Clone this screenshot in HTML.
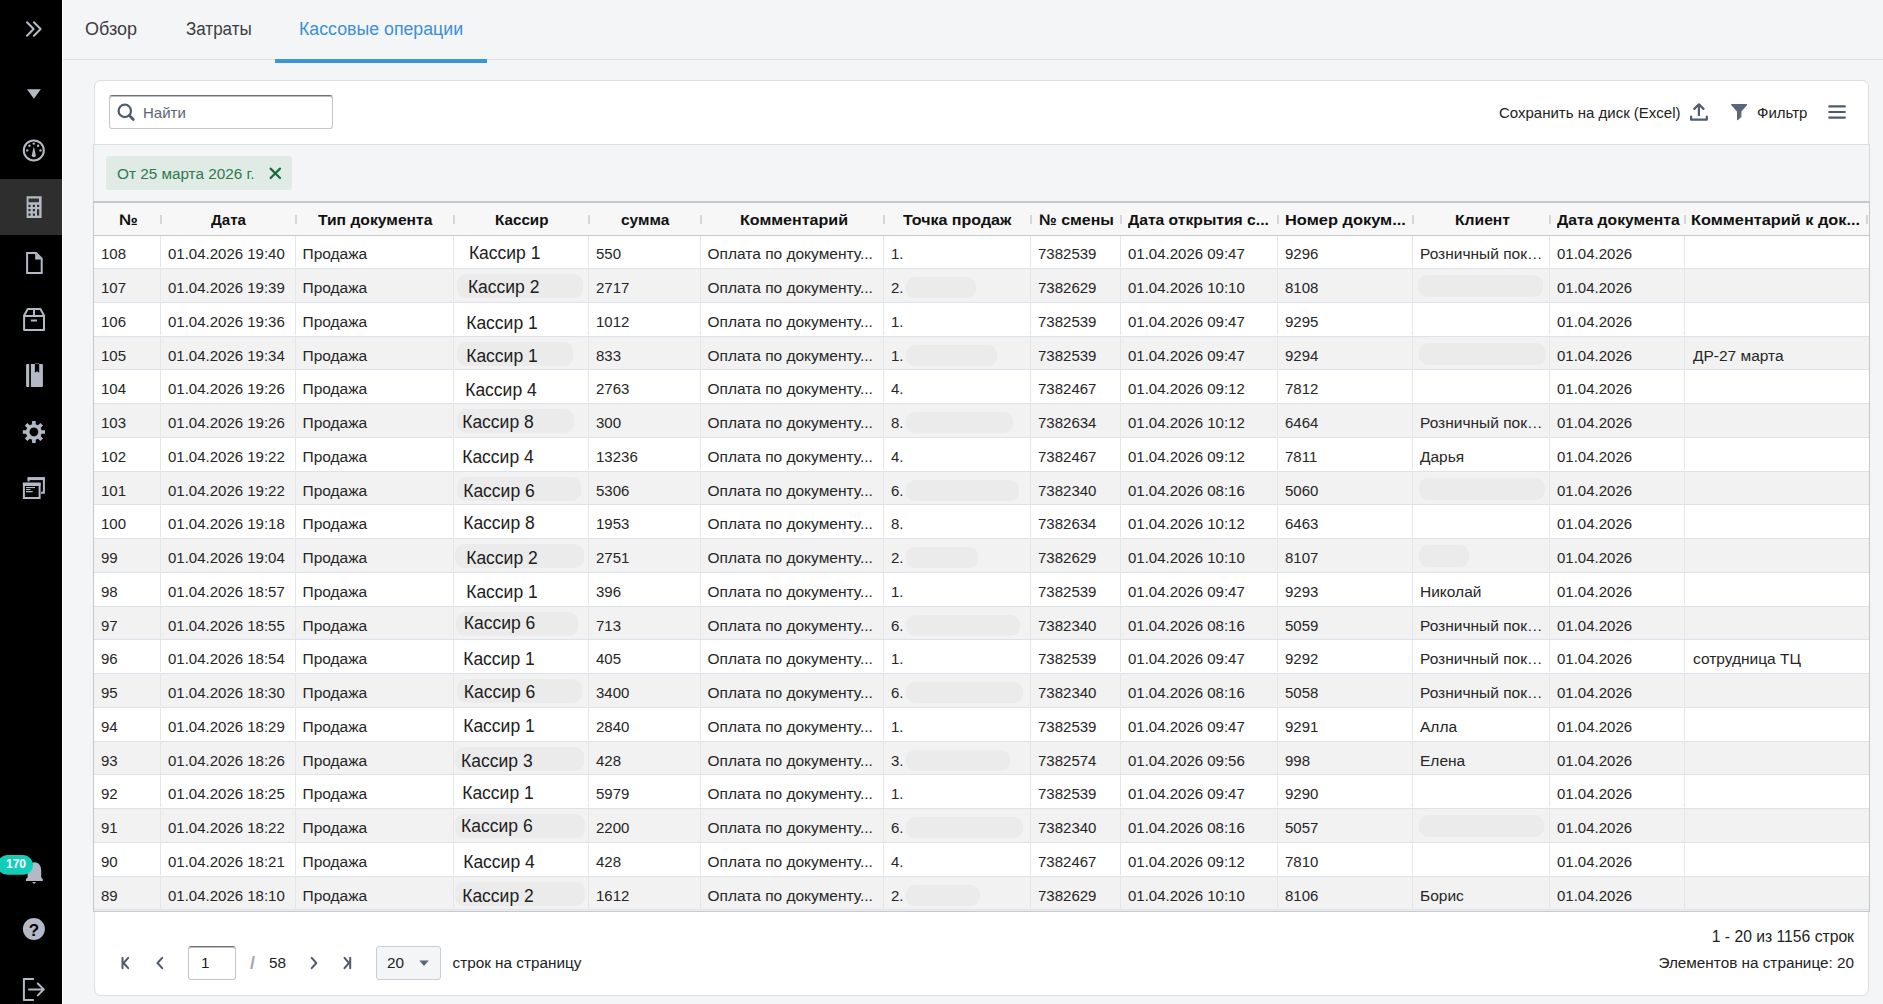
<!DOCTYPE html>
<html lang="ru">
<head>
<meta charset="utf-8">
<title>Кассовые операции</title>
<style>
*{box-sizing:border-box;margin:0;padding:0}
html,body{width:1883px;height:1004px;overflow:hidden}
body{background:#f4f5f7;font-family:"Liberation Sans",sans-serif;color:#333;position:relative}
.abs{position:absolute}
/* sidebar */
#sb{position:absolute;left:0;top:0;width:62px;height:1004px;background:#000}
#sb .act{position:absolute;left:0;top:179px;width:62px;height:56px;background:#2e2e2e}
#sb svg{position:absolute}
#sbline{position:absolute;left:62px;top:0;width:1px;height:1004px;background:#fff}
/* tabs */
#tabs{position:absolute;left:63px;top:0;width:1820px;height:60px;border-bottom:1px solid #dcdee2}
.tab{position:absolute;top:18px;font-size:18px;color:#3d3d3d;transform-origin:0 0;white-space:nowrap;line-height:22px}
.tab.on{color:#3a90d3}
#uline{position:absolute;left:275px;top:59px;width:212px;height:4px;background:#3a96db}
/* card */
#card{position:absolute;left:94px;top:80px;width:1775px;height:916px;background:#fff;border:1px solid #dcdee1;border-radius:7px}
#search{position:absolute;left:109px;top:95px;width:224px;height:34px;border:1px solid #c3c6ca;border-top:1px solid #6f7378;box-shadow:inset 0 1px 0 #b9bcc0;border-radius:3px;background:#fff}
#search .ph{position:absolute;left:33px;top:8px;font-size:15px;color:#5a6573;line-height:18px}
#filt{position:absolute;left:93px;top:144px;width:1777px;height:58px;background:#f4f5f7;border-top:1px solid #dcdee2;border-left:1px solid #d6d8dc;border-right:1px solid #d6d8dc}
#chip{position:absolute;left:106px;top:156px;width:186px;height:34px;background:#e1ebe6;border-radius:3px}
#chip span{position:absolute;left:11px;top:9px;font-size:15.3px;color:#2d7a4b;white-space:nowrap;line-height:18px}
.tool{position:absolute;top:103px;font-size:15px;color:#222;white-space:nowrap;line-height:20px}
/* table */
#thead{position:absolute;z-index:2;left:94px;top:201px;width:1775px;height:35px;background:#f7f7f7;border-top:2px solid #c5c7c9;border-bottom:1px solid #c5c7c9}
#tl{position:absolute;z-index:3;left:93px;top:201px;width:1px;height:711px;background:#c5c7c9}
#tr{position:absolute;z-index:3;left:1869px;top:201px;width:1px;height:711px;background:#c5c7c9}
.th{position:absolute;transform-origin:0 0;top:8px;font-size:15.5px;font-weight:700;color:#111;white-space:nowrap;line-height:18px}
.hdiv{position:absolute;top:12px;width:2px;height:9px;background:#d6d6d6}
#tbody{position:absolute;left:94px;top:235.25px;width:1775px;height:675.75px;background:#eceef2}
.tr{position:absolute;left:0;width:1775px;height:33.75px;background:#fff;border-bottom:1px solid #dde2ea}
.tr.g{background:#f2f2f2}
.vl{position:absolute;top:0;width:1px;height:32px;background:#e6e6e6}
.td{position:absolute;top:10px;font-size:15.5px;color:#262626;white-space:nowrap;line-height:17.65px;transform:scaleX(0.968);transform-origin:0 0}
.cash{position:absolute;top:7px;font-size:17.5px;color:#202020;white-space:nowrap;line-height:20px}
.td.l{font-size:15.5px;top:10px;line-height:17.65px;transform:none}
.blob{position:absolute;background:#ebebeb;border-radius:9px}
#tbot{position:absolute;left:93px;top:911px;width:1777px;height:1px;background:#c6c8ca}
/* footer */
.pg{position:absolute;font-size:15.3px;color:#222;white-space:nowrap;line-height:18px}
#pinput{position:absolute;left:188px;top:946px;width:48px;height:34px;border:1px solid #c3c6ca;border-top:1px solid #6f7378;box-shadow:inset 0 1px 0 #b9bcc0;border-radius:3px;background:#fff}
#psel{position:absolute;left:376px;top:946px;width:65px;height:34px;border:1px solid #c9ccd0;border-radius:3px;background:#f4f5f7}
</style>
</head>
<body>
<div id="sb">
  <div class="act"></div>
<svg width="62" height="1004" viewBox="0 0 62 1004" style="left:0;top:0">
 <g fill="none" stroke="#b3b9c5" stroke-width="2" stroke-linecap="round" stroke-linejoin="round">
  <path d="M27 22.2L33.6 29L27 35.8M33.9 22.2L40.6 29L33.9 35.8"/>
 </g>
 <path d="M27 89.2H40.8L33.9 98.7Z" fill="#b3b9c5"/>
 <g fill="none" stroke="#b3b9c5" stroke-width="2">
  <circle cx="33.8" cy="150.4" r="10"/>
 </g>
 <g fill="#b3b9c5">
  <circle cx="33.8" cy="143.6" r="1.2"/><circle cx="29.5" cy="145.8" r="1.2"/><circle cx="38.1" cy="145.8" r="1.2"/>
  <circle cx="27.2" cy="150.4" r="1.2"/><circle cx="40.5" cy="150.4" r="1.2"/>
  <path d="M33.8 146.2L35.8 155.2A2 2 0 0 1 31.8 155.2Z"/>
 </g>
 <path fill="#b3b9c5" fill-rule="evenodd" d="M26.6 196.2H41.6V218.1H26.6Z M28.5 198.4V202.2H39V198.4Z M28.4 204.7h2.2v2.2h-2.2Z M32.8 204.7h2.2v2.2h-2.2Z M37 204.7h2.2v2.2h-2.2Z M28.4 209h2.2v2.2h-2.2Z M32.8 209h2.2v2.2h-2.2Z M37 209.3h2.2v6.2h-2.2Z M28.4 213.5h2.2v2.2h-2.2Z M32.8 213.5h2.2v2.2h-2.2Z"/>
 <g fill="none" stroke="#b3b9c5" stroke-width="2" stroke-linejoin="miter">
  <path d="M27.1 253.1H36.2L41.7 258.6V272.9H27.1Z"/>
 </g>
 <path d="M35.2 253.2V259.6H41.8Z" fill="#b3b9c5"/>
 <g fill="none" stroke="#b3b9c5" stroke-width="2" stroke-linejoin="round">
  <path d="M24.1 315.5L27.8 309H40.4L44 315.5V330H24.1Z"/>
  <path d="M24.1 316H44M34 309V316M30.9 320.6H37"/>
 </g>
 <path fill="#b3b9c5" fill-rule="evenodd" d="M27.1 363.9H42A1 1 0 0 1 42.9 364.9V385.9A1 1 0 0 1 42 386.9H27.1A1 1 0 0 1 26.1 385.9V364.9A1 1 0 0 1 27.1 363.9Z M29.2 363.9H30.9V386.9H29.2Z M34.9 363.6H39.2V372.8L37.1 371.2L34.9 372.8Z"/>
 <path fill="#b3b9c5" fill-rule="evenodd" d="M32.1 420.9h3.6v3.4a7.6 7.6 0 0 1 2.3 1l2.4-2.4 2.6 2.6-2.4 2.4a7.6 7.6 0 0 1 1 2.3h3.4v3.6h-3.4a7.6 7.6 0 0 1-1 2.3l2.4 2.4-2.6 2.6-2.4-2.4a7.6 7.6 0 0 1-2.3 1v3.4h-3.6v-3.4a7.6 7.6 0 0 1-2.3-1l-2.4 2.4-2.6-2.6 2.4-2.4a7.6 7.6 0 0 1-1-2.3h-3.4v-3.6h3.4a7.6 7.6 0 0 1 1-2.3l-2.4-2.4 2.6-2.6 2.4 2.4a7.6 7.6 0 0 1 2.3-1Z M33.9 427.5a4.4 4.4 0 1 0 0.01 0Z"/>
 <g fill="none" stroke="#b3b9c5" stroke-width="2">
  <path d="M28.6 481.5V478.6H43.9V492.7H41"/>
  <path d="M23.9 484H39.6V497.9H23.9Z"/>
 </g>
 <g fill="#b3b9c5">
  <rect x="27.6" y="477.1" width="17.3" height="3"/>
  <rect x="22.9" y="482.5" width="17.7" height="3.5"/>
  <rect x="26" y="487" width="9" height="1.1"/>
  <rect x="26" y="489" width="4.5" height="1.1"/>
  <rect x="26" y="491" width="6.7" height="1.3"/>
 </g>
 <path fill="#b3b9c5" d="M34.5 862.2C39 862.2 41.2 866 41.2 870.5V877.2L42.8 879.2V880.9H25.9V879.2L27.6 877.2V870.5C27.6 866 30 862.2 34.5 862.2Z M32 882H36.2L34.1 883.9Z"/>
 <rect x="-2.5" y="855" width="35.5" height="19.8" rx="9.9" fill="#13cdb9"/>
 <text x="16" y="868" font-family="Liberation Sans" font-weight="700" font-size="12" fill="#fff" text-anchor="middle">170</text>
 <circle cx="33.9" cy="929" r="11" fill="#b3b9c5"/>
 <text x="33.9" y="935.6" font-family="Liberation Sans" font-weight="700" font-size="17" fill="#000" text-anchor="middle">?</text>
 <g fill="none" stroke="#b3b9c5" stroke-width="2" stroke-linecap="round" stroke-linejoin="round">
  <path d="M33.2 978.9H23.9V1000H33.2"/>
  <path d="M29 989.4H43.8M37.8 983.5L43.8 989.4L37.8 995.4"/>
 </g>
</svg>
</div>
<div id="sbline"></div>

<div id="tabs"></div>
<div class="tab" style="left:85px">Обзор</div>
<div class="tab" style="left:185.5px;transform:scaleX(0.945)">Затраты</div>
<div class="tab on" style="left:299px;transform:scaleX(0.986)">Кассовые операции</div>
<div id="uline"></div>

<div id="card"></div>
<div id="search"><span class="ph">Найти</span></div>
<div class="tool" style="left:1499px">Сохранить на диск (Excel)</div>
<div class="tool" style="left:1757px">Фильтр</div>

<div id="filt"></div>
<div id="chip"><span>От 25 марта 2026 г.</span></div>

<div id="thead">
<div class="th" style="left:25.1px;transform:scaleX(1.09)">№</div>
<div class="th" style="left:116.9px;transform:scaleX(0.975)">Дата</div>
<div class="th" style="left:223.7px;transform:scaleX(1.011)">Тип документа</div>
<div class="th" style="left:401.2px;transform:scaleX(0.981)">Кассир</div>
<div class="th" style="left:527.0px;transform:scaleX(1.0)">сумма</div>
<div class="th" style="left:645.8px;transform:scaleX(1.035)">Комментарий</div>
<div class="th" style="left:809.4px;transform:scaleX(1.034)">Точка продаж</div>
<div class="th" style="left:945.2px;transform:scaleX(1.028)">№ смены</div>
<div class="th" style="left:1033.7px;transform:scaleX(1.011)">Дата открытия с...</div>
<div class="th" style="left:1190.9px;transform:scaleX(1.059)">Номер докум...</div>
<div class="th" style="left:1360.8px;transform:scaleX(1.011)">Клиент</div>
<div class="th" style="left:1462.7px;transform:scaleX(1.011)">Дата документа</div>
<div class="th" style="left:1597.2px;transform:scaleX(1.052)">Комментарий к док...</div>
<div class="hdiv" style="left:66px"></div>
<div class="hdiv" style="left:201px"></div>
<div class="hdiv" style="left:359px"></div>
<div class="hdiv" style="left:494px"></div>
<div class="hdiv" style="left:606px"></div>
<div class="hdiv" style="left:789px"></div>
<div class="hdiv" style="left:936px"></div>
<div class="hdiv" style="left:1026px"></div>
<div class="hdiv" style="left:1183px"></div>
<div class="hdiv" style="left:1318px"></div>
<div class="hdiv" style="left:1455px"></div>
<div class="hdiv" style="left:1590px"></div>
<div class="hdiv" style="left:1772px"></div>
</div>
<div id="tbody">
<div class="tr" style="top:0.00px"><i class="vl" style="left:66px"></i><i class="vl" style="left:201px"></i><i class="vl" style="left:359px"></i><i class="vl" style="left:494px"></i><i class="vl" style="left:606px"></i><i class="vl" style="left:789px"></i><i class="vl" style="left:936px"></i><i class="vl" style="left:1026px"></i><i class="vl" style="left:1183px"></i><i class="vl" style="left:1318px"></i><i class="vl" style="left:1455px"></i><i class="vl" style="left:1590px"></i><span class="td" style="left:6.5px">108</span><span class="td" style="left:74.0px">01.04.2026 19:40</span><span class="td l" style="left:208.5px">Продажа</span><span class="cash" style="left:374.9px;top:8px">Кассир 1</span><span class="td" style="left:501.5px">550</span><span class="td l" style="left:613.5px">Оплата по документу...</span><span class="td" style="left:797.0px">1.</span><span class="td" style="left:943.5px">7382539</span><span class="td" style="left:1033.5px">01.04.2026 09:47</span><span class="td" style="left:1191.0px">9296</span><span class="td l" style="left:1326.0px">Розничный пок…</span><span class="td" style="left:1463.0px">01.04.2026</span></div>
<div class="tr g" style="top:33.75px"><i class="vl" style="left:66px"></i><i class="vl" style="left:201px"></i><i class="vl" style="left:359px"></i><i class="vl" style="left:494px"></i><i class="vl" style="left:606px"></i><i class="vl" style="left:789px"></i><i class="vl" style="left:936px"></i><i class="vl" style="left:1026px"></i><i class="vl" style="left:1183px"></i><i class="vl" style="left:1318px"></i><i class="vl" style="left:1455px"></i><i class="vl" style="left:1590px"></i><span class="td" style="left:6.5px">107</span><span class="td" style="left:74.0px">01.04.2026 19:39</span><span class="td l" style="left:208.5px">Продажа</span><span class="blob" style="left:363px;width:126px;top:5px;height:24px"></span><span class="cash" style="left:373.9px;top:8px">Кассир 2</span><span class="td" style="left:501.5px">2717</span><span class="td l" style="left:613.5px">Оплата по документу...</span><span class="td" style="left:797.0px">2.</span><span class="blob" style="left:812px;width:70px;top:8px;height:21px"></span><span class="td" style="left:943.5px">7382629</span><span class="td" style="left:1033.5px">01.04.2026 10:10</span><span class="td" style="left:1191.0px">8108</span><span class="blob" style="left:1324px;width:125px;top:6px;height:22px"></span><span class="td" style="left:1463.0px">01.04.2026</span></div>
<div class="tr" style="top:67.50px"><i class="vl" style="left:66px"></i><i class="vl" style="left:201px"></i><i class="vl" style="left:359px"></i><i class="vl" style="left:494px"></i><i class="vl" style="left:606px"></i><i class="vl" style="left:789px"></i><i class="vl" style="left:936px"></i><i class="vl" style="left:1026px"></i><i class="vl" style="left:1183px"></i><i class="vl" style="left:1318px"></i><i class="vl" style="left:1455px"></i><i class="vl" style="left:1590px"></i><span class="td" style="left:6.5px">106</span><span class="td" style="left:74.0px">01.04.2026 19:36</span><span class="td l" style="left:208.5px">Продажа</span><span class="cash" style="left:372.2px;top:10px">Кассир 1</span><span class="td" style="left:501.5px">1012</span><span class="td l" style="left:613.5px">Оплата по документу...</span><span class="td" style="left:797.0px">1.</span><span class="td" style="left:943.5px">7382539</span><span class="td" style="left:1033.5px">01.04.2026 09:47</span><span class="td" style="left:1191.0px">9295</span><span class="td" style="left:1463.0px">01.04.2026</span></div>
<div class="tr g" style="top:101.25px"><i class="vl" style="left:66px"></i><i class="vl" style="left:201px"></i><i class="vl" style="left:359px"></i><i class="vl" style="left:494px"></i><i class="vl" style="left:606px"></i><i class="vl" style="left:789px"></i><i class="vl" style="left:936px"></i><i class="vl" style="left:1026px"></i><i class="vl" style="left:1183px"></i><i class="vl" style="left:1318px"></i><i class="vl" style="left:1455px"></i><i class="vl" style="left:1590px"></i><span class="td" style="left:6.5px">105</span><span class="td" style="left:74.0px">01.04.2026 19:34</span><span class="td l" style="left:208.5px">Продажа</span><span class="blob" style="left:363px;width:116px;top:5px;height:24px"></span><span class="cash" style="left:372.2px;top:9px">Кассир 1</span><span class="td" style="left:501.5px">833</span><span class="td l" style="left:613.5px">Оплата по документу...</span><span class="td" style="left:797.0px">1.</span><span class="blob" style="left:812px;width:91px;top:8px;height:21px"></span><span class="td" style="left:943.5px">7382539</span><span class="td" style="left:1033.5px">01.04.2026 09:47</span><span class="td" style="left:1191.0px">9294</span><span class="blob" style="left:1325px;width:127px;top:6px;height:22px"></span><span class="td" style="left:1463.0px">01.04.2026</span><span class="td l" style="left:1599.0px">ДР-27 марта</span></div>
<div class="tr" style="top:135.00px"><i class="vl" style="left:66px"></i><i class="vl" style="left:201px"></i><i class="vl" style="left:359px"></i><i class="vl" style="left:494px"></i><i class="vl" style="left:606px"></i><i class="vl" style="left:789px"></i><i class="vl" style="left:936px"></i><i class="vl" style="left:1026px"></i><i class="vl" style="left:1183px"></i><i class="vl" style="left:1318px"></i><i class="vl" style="left:1455px"></i><i class="vl" style="left:1590px"></i><span class="td" style="left:6.5px">104</span><span class="td" style="left:74.0px">01.04.2026 19:26</span><span class="td l" style="left:208.5px">Продажа</span><span class="cash" style="left:371.2px;top:10px">Кассир 4</span><span class="td" style="left:501.5px">2763</span><span class="td l" style="left:613.5px">Оплата по документу...</span><span class="td" style="left:797.0px">4.</span><span class="td" style="left:943.5px">7382467</span><span class="td" style="left:1033.5px">01.04.2026 09:12</span><span class="td" style="left:1191.0px">7812</span><span class="td" style="left:1463.0px">01.04.2026</span></div>
<div class="tr g" style="top:168.75px"><i class="vl" style="left:66px"></i><i class="vl" style="left:201px"></i><i class="vl" style="left:359px"></i><i class="vl" style="left:494px"></i><i class="vl" style="left:606px"></i><i class="vl" style="left:789px"></i><i class="vl" style="left:936px"></i><i class="vl" style="left:1026px"></i><i class="vl" style="left:1183px"></i><i class="vl" style="left:1318px"></i><i class="vl" style="left:1455px"></i><i class="vl" style="left:1590px"></i><span class="td" style="left:6.5px">103</span><span class="td" style="left:74.0px">01.04.2026 19:26</span><span class="td l" style="left:208.5px">Продажа</span><span class="blob" style="left:363px;width:117px;top:5px;height:24px"></span><span class="cash" style="left:368.2px;top:8px">Кассир 8</span><span class="td" style="left:501.5px">300</span><span class="td l" style="left:613.5px">Оплата по документу...</span><span class="td" style="left:797.0px">8.</span><span class="blob" style="left:812px;width:107px;top:8px;height:21px"></span><span class="td" style="left:943.5px">7382634</span><span class="td" style="left:1033.5px">01.04.2026 10:12</span><span class="td" style="left:1191.0px">6464</span><span class="td l" style="left:1326.0px">Розничный пок…</span><span class="td" style="left:1463.0px">01.04.2026</span></div>
<div class="tr" style="top:202.50px"><i class="vl" style="left:66px"></i><i class="vl" style="left:201px"></i><i class="vl" style="left:359px"></i><i class="vl" style="left:494px"></i><i class="vl" style="left:606px"></i><i class="vl" style="left:789px"></i><i class="vl" style="left:936px"></i><i class="vl" style="left:1026px"></i><i class="vl" style="left:1183px"></i><i class="vl" style="left:1318px"></i><i class="vl" style="left:1455px"></i><i class="vl" style="left:1590px"></i><span class="td" style="left:6.5px">102</span><span class="td" style="left:74.0px">01.04.2026 19:22</span><span class="td l" style="left:208.5px">Продажа</span><span class="cash" style="left:368.2px;top:9px">Кассир 4</span><span class="td" style="left:501.5px">13236</span><span class="td l" style="left:613.5px">Оплата по документу...</span><span class="td" style="left:797.0px">4.</span><span class="td" style="left:943.5px">7382467</span><span class="td" style="left:1033.5px">01.04.2026 09:12</span><span class="td" style="left:1191.0px">7811</span><span class="td l" style="left:1326.0px">Дарья</span><span class="td" style="left:1463.0px">01.04.2026</span></div>
<div class="tr g" style="top:236.25px"><i class="vl" style="left:66px"></i><i class="vl" style="left:201px"></i><i class="vl" style="left:359px"></i><i class="vl" style="left:494px"></i><i class="vl" style="left:606px"></i><i class="vl" style="left:789px"></i><i class="vl" style="left:936px"></i><i class="vl" style="left:1026px"></i><i class="vl" style="left:1183px"></i><i class="vl" style="left:1318px"></i><i class="vl" style="left:1455px"></i><i class="vl" style="left:1590px"></i><span class="td" style="left:6.5px">101</span><span class="td" style="left:74.0px">01.04.2026 19:22</span><span class="td l" style="left:208.5px">Продажа</span><span class="blob" style="left:363px;width:124px;top:5px;height:24px"></span><span class="cash" style="left:369.2px;top:9px">Кассир 6</span><span class="td" style="left:501.5px">5306</span><span class="td l" style="left:613.5px">Оплата по документу...</span><span class="td" style="left:797.0px">6.</span><span class="blob" style="left:812px;width:113px;top:8px;height:21px"></span><span class="td" style="left:943.5px">7382340</span><span class="td" style="left:1033.5px">01.04.2026 08:16</span><span class="td" style="left:1191.0px">5060</span><span class="blob" style="left:1325px;width:126px;top:6px;height:22px"></span><span class="td" style="left:1463.0px">01.04.2026</span></div>
<div class="tr" style="top:270.00px"><i class="vl" style="left:66px"></i><i class="vl" style="left:201px"></i><i class="vl" style="left:359px"></i><i class="vl" style="left:494px"></i><i class="vl" style="left:606px"></i><i class="vl" style="left:789px"></i><i class="vl" style="left:936px"></i><i class="vl" style="left:1026px"></i><i class="vl" style="left:1183px"></i><i class="vl" style="left:1318px"></i><i class="vl" style="left:1455px"></i><i class="vl" style="left:1590px"></i><span class="td" style="left:6.5px">100</span><span class="td" style="left:74.0px">01.04.2026 19:18</span><span class="td l" style="left:208.5px">Продажа</span><span class="cash" style="left:369.2px;top:8px">Кассир 8</span><span class="td" style="left:501.5px">1953</span><span class="td l" style="left:613.5px">Оплата по документу...</span><span class="td" style="left:797.0px">8.</span><span class="td" style="left:943.5px">7382634</span><span class="td" style="left:1033.5px">01.04.2026 10:12</span><span class="td" style="left:1191.0px">6463</span><span class="td" style="left:1463.0px">01.04.2026</span></div>
<div class="tr g" style="top:303.75px"><i class="vl" style="left:66px"></i><i class="vl" style="left:201px"></i><i class="vl" style="left:359px"></i><i class="vl" style="left:494px"></i><i class="vl" style="left:606px"></i><i class="vl" style="left:789px"></i><i class="vl" style="left:936px"></i><i class="vl" style="left:1026px"></i><i class="vl" style="left:1183px"></i><i class="vl" style="left:1318px"></i><i class="vl" style="left:1455px"></i><i class="vl" style="left:1590px"></i><span class="td" style="left:6.5px">99</span><span class="td" style="left:74.0px">01.04.2026 19:04</span><span class="td l" style="left:208.5px">Продажа</span><span class="blob" style="left:361px;width:129px;top:5px;height:24px"></span><span class="cash" style="left:372.2px;top:9px">Кассир 2</span><span class="td" style="left:501.5px">2751</span><span class="td l" style="left:613.5px">Оплата по документу...</span><span class="td" style="left:797.0px">2.</span><span class="blob" style="left:812px;width:72px;top:8px;height:21px"></span><span class="td" style="left:943.5px">7382629</span><span class="td" style="left:1033.5px">01.04.2026 10:10</span><span class="td" style="left:1191.0px">8107</span><span class="blob" style="left:1325px;width:50px;top:6px;height:22px"></span><span class="td" style="left:1463.0px">01.04.2026</span></div>
<div class="tr" style="top:337.50px"><i class="vl" style="left:66px"></i><i class="vl" style="left:201px"></i><i class="vl" style="left:359px"></i><i class="vl" style="left:494px"></i><i class="vl" style="left:606px"></i><i class="vl" style="left:789px"></i><i class="vl" style="left:936px"></i><i class="vl" style="left:1026px"></i><i class="vl" style="left:1183px"></i><i class="vl" style="left:1318px"></i><i class="vl" style="left:1455px"></i><i class="vl" style="left:1590px"></i><span class="td" style="left:6.5px">98</span><span class="td" style="left:74.0px">01.04.2026 18:57</span><span class="td l" style="left:208.5px">Продажа</span><span class="cash" style="left:372.2px;top:9px">Кассир 1</span><span class="td" style="left:501.5px">396</span><span class="td l" style="left:613.5px">Оплата по документу...</span><span class="td" style="left:797.0px">1.</span><span class="td" style="left:943.5px">7382539</span><span class="td" style="left:1033.5px">01.04.2026 09:47</span><span class="td" style="left:1191.0px">9293</span><span class="td l" style="left:1326.0px">Николай</span><span class="td" style="left:1463.0px">01.04.2026</span></div>
<div class="tr g" style="top:371.25px"><i class="vl" style="left:66px"></i><i class="vl" style="left:201px"></i><i class="vl" style="left:359px"></i><i class="vl" style="left:494px"></i><i class="vl" style="left:606px"></i><i class="vl" style="left:789px"></i><i class="vl" style="left:936px"></i><i class="vl" style="left:1026px"></i><i class="vl" style="left:1183px"></i><i class="vl" style="left:1318px"></i><i class="vl" style="left:1455px"></i><i class="vl" style="left:1590px"></i><span class="td" style="left:6.5px">97</span><span class="td" style="left:74.0px">01.04.2026 18:55</span><span class="td l" style="left:208.5px">Продажа</span><span class="blob" style="left:362px;width:122px;top:5px;height:24px"></span><span class="cash" style="left:369.8px;top:6px">Кассир 6</span><span class="td" style="left:501.5px">713</span><span class="td l" style="left:613.5px">Оплата по документу...</span><span class="td" style="left:797.0px">6.</span><span class="blob" style="left:812px;width:114px;top:8px;height:21px"></span><span class="td" style="left:943.5px">7382340</span><span class="td" style="left:1033.5px">01.04.2026 08:16</span><span class="td" style="left:1191.0px">5059</span><span class="td l" style="left:1326.0px">Розничный пок…</span><span class="td" style="left:1463.0px">01.04.2026</span></div>
<div class="tr" style="top:405.00px"><i class="vl" style="left:66px"></i><i class="vl" style="left:201px"></i><i class="vl" style="left:359px"></i><i class="vl" style="left:494px"></i><i class="vl" style="left:606px"></i><i class="vl" style="left:789px"></i><i class="vl" style="left:936px"></i><i class="vl" style="left:1026px"></i><i class="vl" style="left:1183px"></i><i class="vl" style="left:1318px"></i><i class="vl" style="left:1455px"></i><i class="vl" style="left:1590px"></i><span class="td" style="left:6.5px">96</span><span class="td" style="left:74.0px">01.04.2026 18:54</span><span class="td l" style="left:208.5px">Продажа</span><span class="cash" style="left:369.2px;top:9px">Кассир 1</span><span class="td" style="left:501.5px">405</span><span class="td l" style="left:613.5px">Оплата по документу...</span><span class="td" style="left:797.0px">1.</span><span class="td" style="left:943.5px">7382539</span><span class="td" style="left:1033.5px">01.04.2026 09:47</span><span class="td" style="left:1191.0px">9292</span><span class="td l" style="left:1326.0px">Розничный пок…</span><span class="td" style="left:1463.0px">01.04.2026</span><span class="td l" style="left:1599.0px">сотрудница ТЦ</span></div>
<div class="tr g" style="top:438.75px"><i class="vl" style="left:66px"></i><i class="vl" style="left:201px"></i><i class="vl" style="left:359px"></i><i class="vl" style="left:494px"></i><i class="vl" style="left:606px"></i><i class="vl" style="left:789px"></i><i class="vl" style="left:936px"></i><i class="vl" style="left:1026px"></i><i class="vl" style="left:1183px"></i><i class="vl" style="left:1318px"></i><i class="vl" style="left:1455px"></i><i class="vl" style="left:1590px"></i><span class="td" style="left:6.5px">95</span><span class="td" style="left:74.0px">01.04.2026 18:30</span><span class="td l" style="left:208.5px">Продажа</span><span class="blob" style="left:363px;width:125px;top:5px;height:24px"></span><span class="cash" style="left:369.8px;top:8px">Кассир 6</span><span class="td" style="left:501.5px">3400</span><span class="td l" style="left:613.5px">Оплата по документу...</span><span class="td" style="left:797.0px">6.</span><span class="blob" style="left:812px;width:117px;top:8px;height:21px"></span><span class="td" style="left:943.5px">7382340</span><span class="td" style="left:1033.5px">01.04.2026 08:16</span><span class="td" style="left:1191.0px">5058</span><span class="td l" style="left:1326.0px">Розничный пок…</span><span class="td" style="left:1463.0px">01.04.2026</span></div>
<div class="tr" style="top:472.50px"><i class="vl" style="left:66px"></i><i class="vl" style="left:201px"></i><i class="vl" style="left:359px"></i><i class="vl" style="left:494px"></i><i class="vl" style="left:606px"></i><i class="vl" style="left:789px"></i><i class="vl" style="left:936px"></i><i class="vl" style="left:1026px"></i><i class="vl" style="left:1183px"></i><i class="vl" style="left:1318px"></i><i class="vl" style="left:1455px"></i><i class="vl" style="left:1590px"></i><span class="td" style="left:6.5px">94</span><span class="td" style="left:74.0px">01.04.2026 18:29</span><span class="td l" style="left:208.5px">Продажа</span><span class="cash" style="left:369.2px;top:8px">Кассир 1</span><span class="td" style="left:501.5px">2840</span><span class="td l" style="left:613.5px">Оплата по документу...</span><span class="td" style="left:797.0px">1.</span><span class="td" style="left:943.5px">7382539</span><span class="td" style="left:1033.5px">01.04.2026 09:47</span><span class="td" style="left:1191.0px">9291</span><span class="td l" style="left:1326.0px">Алла</span><span class="td" style="left:1463.0px">01.04.2026</span></div>
<div class="tr g" style="top:506.25px"><i class="vl" style="left:66px"></i><i class="vl" style="left:201px"></i><i class="vl" style="left:359px"></i><i class="vl" style="left:494px"></i><i class="vl" style="left:606px"></i><i class="vl" style="left:789px"></i><i class="vl" style="left:936px"></i><i class="vl" style="left:1026px"></i><i class="vl" style="left:1183px"></i><i class="vl" style="left:1318px"></i><i class="vl" style="left:1455px"></i><i class="vl" style="left:1590px"></i><span class="td" style="left:6.5px">93</span><span class="td" style="left:74.0px">01.04.2026 18:26</span><span class="td l" style="left:208.5px">Продажа</span><span class="blob" style="left:361px;width:129px;top:5px;height:24px"></span><span class="cash" style="left:367.1px;top:9px">Кассир 3</span><span class="td" style="left:501.5px">428</span><span class="td l" style="left:613.5px">Оплата по документу...</span><span class="td" style="left:797.0px">3.</span><span class="blob" style="left:812px;width:104px;top:8px;height:21px"></span><span class="td" style="left:943.5px">7382574</span><span class="td" style="left:1033.5px">01.04.2026 09:56</span><span class="td" style="left:1191.0px">998</span><span class="td l" style="left:1326.0px">Елена</span><span class="td" style="left:1463.0px">01.04.2026</span></div>
<div class="tr" style="top:540.00px"><i class="vl" style="left:66px"></i><i class="vl" style="left:201px"></i><i class="vl" style="left:359px"></i><i class="vl" style="left:494px"></i><i class="vl" style="left:606px"></i><i class="vl" style="left:789px"></i><i class="vl" style="left:936px"></i><i class="vl" style="left:1026px"></i><i class="vl" style="left:1183px"></i><i class="vl" style="left:1318px"></i><i class="vl" style="left:1455px"></i><i class="vl" style="left:1590px"></i><span class="td" style="left:6.5px">92</span><span class="td" style="left:74.0px">01.04.2026 18:25</span><span class="td l" style="left:208.5px">Продажа</span><span class="cash" style="left:368.2px;top:8px">Кассир 1</span><span class="td" style="left:501.5px">5979</span><span class="td l" style="left:613.5px">Оплата по документу...</span><span class="td" style="left:797.0px">1.</span><span class="td" style="left:943.5px">7382539</span><span class="td" style="left:1033.5px">01.04.2026 09:47</span><span class="td" style="left:1191.0px">9290</span><span class="td" style="left:1463.0px">01.04.2026</span></div>
<div class="tr g" style="top:573.75px"><i class="vl" style="left:66px"></i><i class="vl" style="left:201px"></i><i class="vl" style="left:359px"></i><i class="vl" style="left:494px"></i><i class="vl" style="left:606px"></i><i class="vl" style="left:789px"></i><i class="vl" style="left:936px"></i><i class="vl" style="left:1026px"></i><i class="vl" style="left:1183px"></i><i class="vl" style="left:1318px"></i><i class="vl" style="left:1455px"></i><i class="vl" style="left:1590px"></i><span class="td" style="left:6.5px">91</span><span class="td" style="left:74.0px">01.04.2026 18:22</span><span class="td l" style="left:208.5px">Продажа</span><span class="blob" style="left:361px;width:130px;top:5px;height:24px"></span><span class="cash" style="left:367.1px;top:7px">Кассир 6</span><span class="td" style="left:501.5px">2200</span><span class="td l" style="left:613.5px">Оплата по документу...</span><span class="td" style="left:797.0px">6.</span><span class="blob" style="left:812px;width:117px;top:8px;height:21px"></span><span class="td" style="left:943.5px">7382340</span><span class="td" style="left:1033.5px">01.04.2026 08:16</span><span class="td" style="left:1191.0px">5057</span><span class="blob" style="left:1325px;width:125px;top:6px;height:22px"></span><span class="td" style="left:1463.0px">01.04.2026</span></div>
<div class="tr" style="top:607.50px"><i class="vl" style="left:66px"></i><i class="vl" style="left:201px"></i><i class="vl" style="left:359px"></i><i class="vl" style="left:494px"></i><i class="vl" style="left:606px"></i><i class="vl" style="left:789px"></i><i class="vl" style="left:936px"></i><i class="vl" style="left:1026px"></i><i class="vl" style="left:1183px"></i><i class="vl" style="left:1318px"></i><i class="vl" style="left:1455px"></i><i class="vl" style="left:1590px"></i><span class="td" style="left:6.5px">90</span><span class="td" style="left:74.0px">01.04.2026 18:21</span><span class="td l" style="left:208.5px">Продажа</span><span class="cash" style="left:369.2px;top:9px">Кассир 4</span><span class="td" style="left:501.5px">428</span><span class="td l" style="left:613.5px">Оплата по документу...</span><span class="td" style="left:797.0px">4.</span><span class="td" style="left:943.5px">7382467</span><span class="td" style="left:1033.5px">01.04.2026 09:12</span><span class="td" style="left:1191.0px">7810</span><span class="td" style="left:1463.0px">01.04.2026</span></div>
<div class="tr g" style="top:641.25px"><i class="vl" style="left:66px"></i><i class="vl" style="left:201px"></i><i class="vl" style="left:359px"></i><i class="vl" style="left:494px"></i><i class="vl" style="left:606px"></i><i class="vl" style="left:789px"></i><i class="vl" style="left:936px"></i><i class="vl" style="left:1026px"></i><i class="vl" style="left:1183px"></i><i class="vl" style="left:1318px"></i><i class="vl" style="left:1455px"></i><i class="vl" style="left:1590px"></i><span class="td" style="left:6.5px">89</span><span class="td" style="left:74.0px">01.04.2026 18:10</span><span class="td l" style="left:208.5px">Продажа</span><span class="blob" style="left:361px;width:130px;top:5px;height:24px"></span><span class="cash" style="left:368.2px;top:9px">Кассир 2</span><span class="td" style="left:501.5px">1612</span><span class="td l" style="left:613.5px">Оплата по документу...</span><span class="td" style="left:797.0px">2.</span><span class="blob" style="left:812px;width:74px;top:8px;height:21px"></span><span class="td" style="left:943.5px">7382629</span><span class="td" style="left:1033.5px">01.04.2026 10:10</span><span class="td" style="left:1191.0px">8106</span><span class="td l" style="left:1326.0px">Борис</span><span class="td" style="left:1463.0px">01.04.2026</span></div>
</div>
<div id="tl"></div>
<div id="tr"></div>
<div id="tbot"></div>

<div id="pinput"><span class="pg" style="left:12px;top:7px">1</span></div>
<div class="pg" style="left:250px;top:953px;color:#a0a7b2;font-size:18px;font-weight:700;line-height:20px">/</div>
<div class="pg" style="left:269px;top:954px">58</div>
<div id="psel"><span class="pg" style="left:10px;top:7px">20</span></div>
<div class="pg" style="left:452.5px;top:954px">строк на страницу</div>
<div class="pg" style="right:29px;top:928px;font-size:15.7px">1 - 20 из 1156 строк</div>
<div class="pg" style="right:29px;top:954px">Элементов на странице: 20</div>
<svg class="abs" width="1883" height="1004" viewBox="0 0 1883 1004" style="left:0;top:0;pointer-events:none">
 <g fill="none" stroke="#4f5c6e" stroke-width="2.2">
  <circle cx="124.8" cy="110.9" r="6.2"/>
  <path d="M129.3 115.4L133.3 119.4" stroke-width="2.8" stroke-linecap="round"/>
 </g>
 <g fill="none" stroke="#4f5c6e" stroke-width="2.2" stroke-linecap="round" stroke-linejoin="round">
  <path d="M1698.9 104.5V115.2M1694.3 108.9L1698.9 104.3L1703.5 108.9"/>
  <path d="M1691.1 116.5V119.7H1706.8V116.5"/>
 </g>
 <path fill="#5b6678" stroke="#5b6678" stroke-width="1.2" stroke-linejoin="round" d="M1731.6 104.6H1746.6L1740.8 111.4V116.6L1737.6 119.5V111.4Z"/>
 <g fill="#4f5c6e">
  <rect x="1828.2" y="105.3" width="17.7" height="2.1" rx="1"/>
  <rect x="1828.2" y="110.9" width="17.7" height="2.1" rx="1"/>
  <rect x="1828.2" y="116.6" width="17.7" height="2.1" rx="1"/>
 </g>
 <g fill="none" stroke="#176b3b" stroke-width="2.2" stroke-linecap="round">
  <path d="M270.6 168.6L280 178M280 168.6L270.6 178"/>
 </g>
 <g fill="none" stroke="#4f5c6e" stroke-width="2" stroke-linecap="round" stroke-linejoin="round">
  <path d="M122.5 957.8V968.2M128.2 957.8L123.6 963L128.2 968.2"/>
  <path d="M162.2 957.8L157.5 963L162.2 968.2"/>
  <path d="M311.7 957.8L316.3 963L311.7 968.2"/>
  <path d="M344.5 957.8L349 963L344.5 968.2M350.2 957.8V968.2"/>
 </g>
 <path d="M419.3 960.5H428.8L424 966Z" fill="#5b6678"/>
</svg>
</body>
</html>
